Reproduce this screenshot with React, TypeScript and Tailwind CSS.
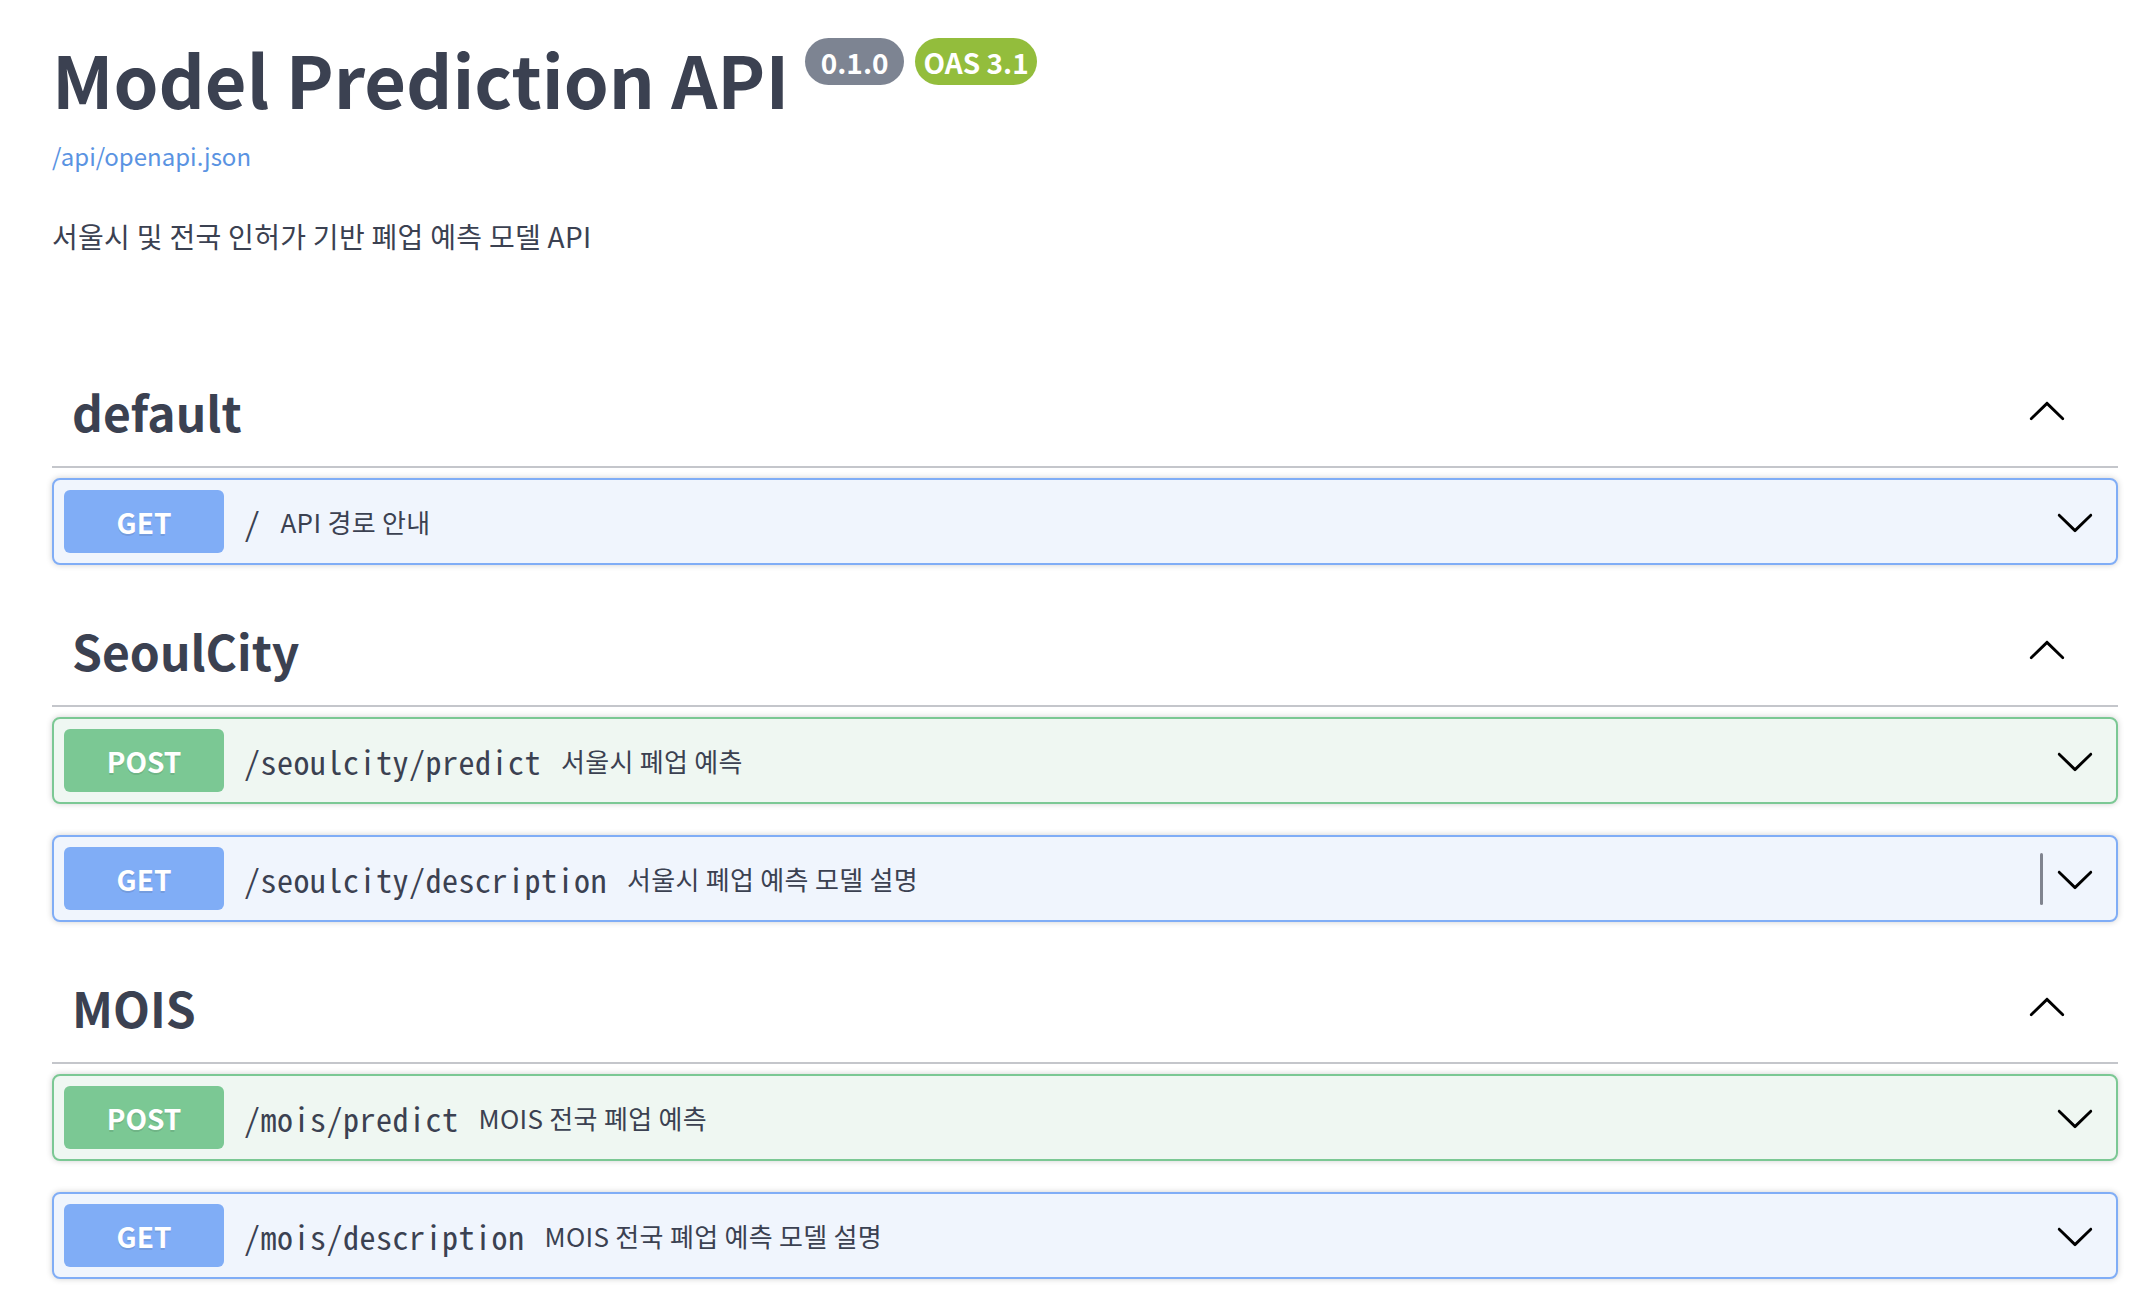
type Method = "GET" | "POST";

interface Operation {
  method: Method;
  path: string;
  summary: string;
  cursor?: boolean;
}

interface Section {
  name: string;
  ops: Operation[];
}

const sections: Section[] = [
  {
    name: "default",
    ops: [{ method: "GET", path: "/", summary: "API 경로 안내" }],
  },
  {
    name: "SeoulCity",
    ops: [
      { method: "POST", path: "/seoulcity/predict", summary: "서울시 폐업 예측" },
      {
        method: "GET",
        path: "/seoulcity/description",
        summary: "서울시 폐업 예측 모델 설명",
        cursor: true,
      },
    ],
  },
  {
    name: "MOIS",
    ops: [
      { method: "POST", path: "/mois/predict", summary: "MOIS 전국 폐업 예측" },
      { method: "GET", path: "/mois/description", summary: "MOIS 전국 폐업 예측 모델 설명" },
    ],
  },
];

const opStyles: Record<Method, { box: string; badge: string }> = {
  GET: {
    box: "border-[#80adf6] bg-[#f0f5fd]",
    badge: "bg-[#80adf6]",
  },
  POST: {
    box: "border-[#7bc894] bg-[#eff7f2]",
    badge: "bg-[#7bc894]",
  },
};

function Arrow({ up }: { up?: boolean }) {
  return (
    <svg
      width="40"
      height="40"
      viewBox="0 0 20 20"
      className={up ? "shrink-0 rotate-180" : "shrink-0"}
    >
      <path
        fill="#000"
        d="M17.418 6.109c.272-.268.709-.268.979 0s.271.701 0 .969l-7.908 7.83c-.27.268-.707.268-.979 0l-7.908-7.83c-.27-.268-.27-.701 0-.969.271-.268.709-.268.979 0L10 13.25l7.418-7.141z"
      />
    </svg>
  );
}

function OpBlock({ op }: { op: Operation }) {
  const style = opStyles[op.method];

  return (
    <div
      className={`mb-[31px] flex items-center rounded-[8px] border-2 p-[10px] shadow-[0_0_6px_rgba(0,0,0,0.19)] ${style.box}`}
    >
      <div
        className={`flex h-[63px] w-[160px] shrink-0 items-center justify-center rounded-[6px] text-[28px] font-bold leading-none text-white [text-shadow:0_2px_0_rgba(0,0,0,0.1)] ${style.badge}`}
      >
        {op.method}
      </div>
      <div className="px-[20px] font-['Noto_Sans_Mono_CJK_KR','DejaVu_Sans_Mono',monospace] text-[32px] tracking-[0.5px] text-[#3b4151]">
        {op.path}
      </div>
      <div className="flex-1 text-[26px] tracking-[0.3px] text-[#3b4151]">{op.summary}</div>
      {op.cursor && (
        <div className="mr-[12px] h-[52px] w-[3px] rounded-full bg-[#80848f]" />
      )}
      <div className="mr-[11px]">
        <Arrow />
      </div>
    </div>
  );
}

function TagSection({ section }: { section: Section }) {
  return (
    <div>
      <div className="mb-[10px] flex items-center border-b-2 border-[#c4c6cb] py-[20px] pl-[20px] pr-[51px]">
        <h3 className="flex-1 text-[48px] font-bold leading-[69px] text-[#3b4151]">
          {section.name}
        </h3>
        <Arrow up />
      </div>

      {section.ops.map((op) => (
        <OpBlock key={op.method + op.path} op={op} />
      ))}
    </div>
  );
}

export default function App() {
  return (
    <div className="min-h-screen bg-white pl-[52px] pr-[32px] font-['Noto_Sans_CJK_KR','Noto_Sans',sans-serif] text-[#3b4151]">
      <div className="flex items-start pt-[42px]">
        <h1 className="text-[72px] font-bold leading-[72px]">Model Prediction API</h1>
        <span className="ml-[16px] mt-[-4px] flex h-[47px] w-[99px] items-center justify-center rounded-full bg-[#7d8492] text-[28px] font-bold leading-none text-white">
          0.1.0
        </span>
        <span className="ml-[11px] mt-[-4px] flex h-[47px] w-[122px] items-center justify-center rounded-full bg-[#93bd3c] text-[28px] font-bold leading-none text-white">
          OAS 3.1
        </span>
      </div>

      <a href="#" className="mt-[22px] block text-[24px] leading-[40px] text-[#5a93e2]">
        /api/openapi.json
      </a>

      <p className="mt-[40px] text-[28px] leading-[40px] tracking-[0.3px]">
        서울시 및 전국 인허가 기반 폐업 예측 모델 API
      </p>

      <div className="mt-[101px]">
        {sections.map((section) => (
          <TagSection key={section.name} section={section} />
        ))}
      </div>
    </div>
  );
}
